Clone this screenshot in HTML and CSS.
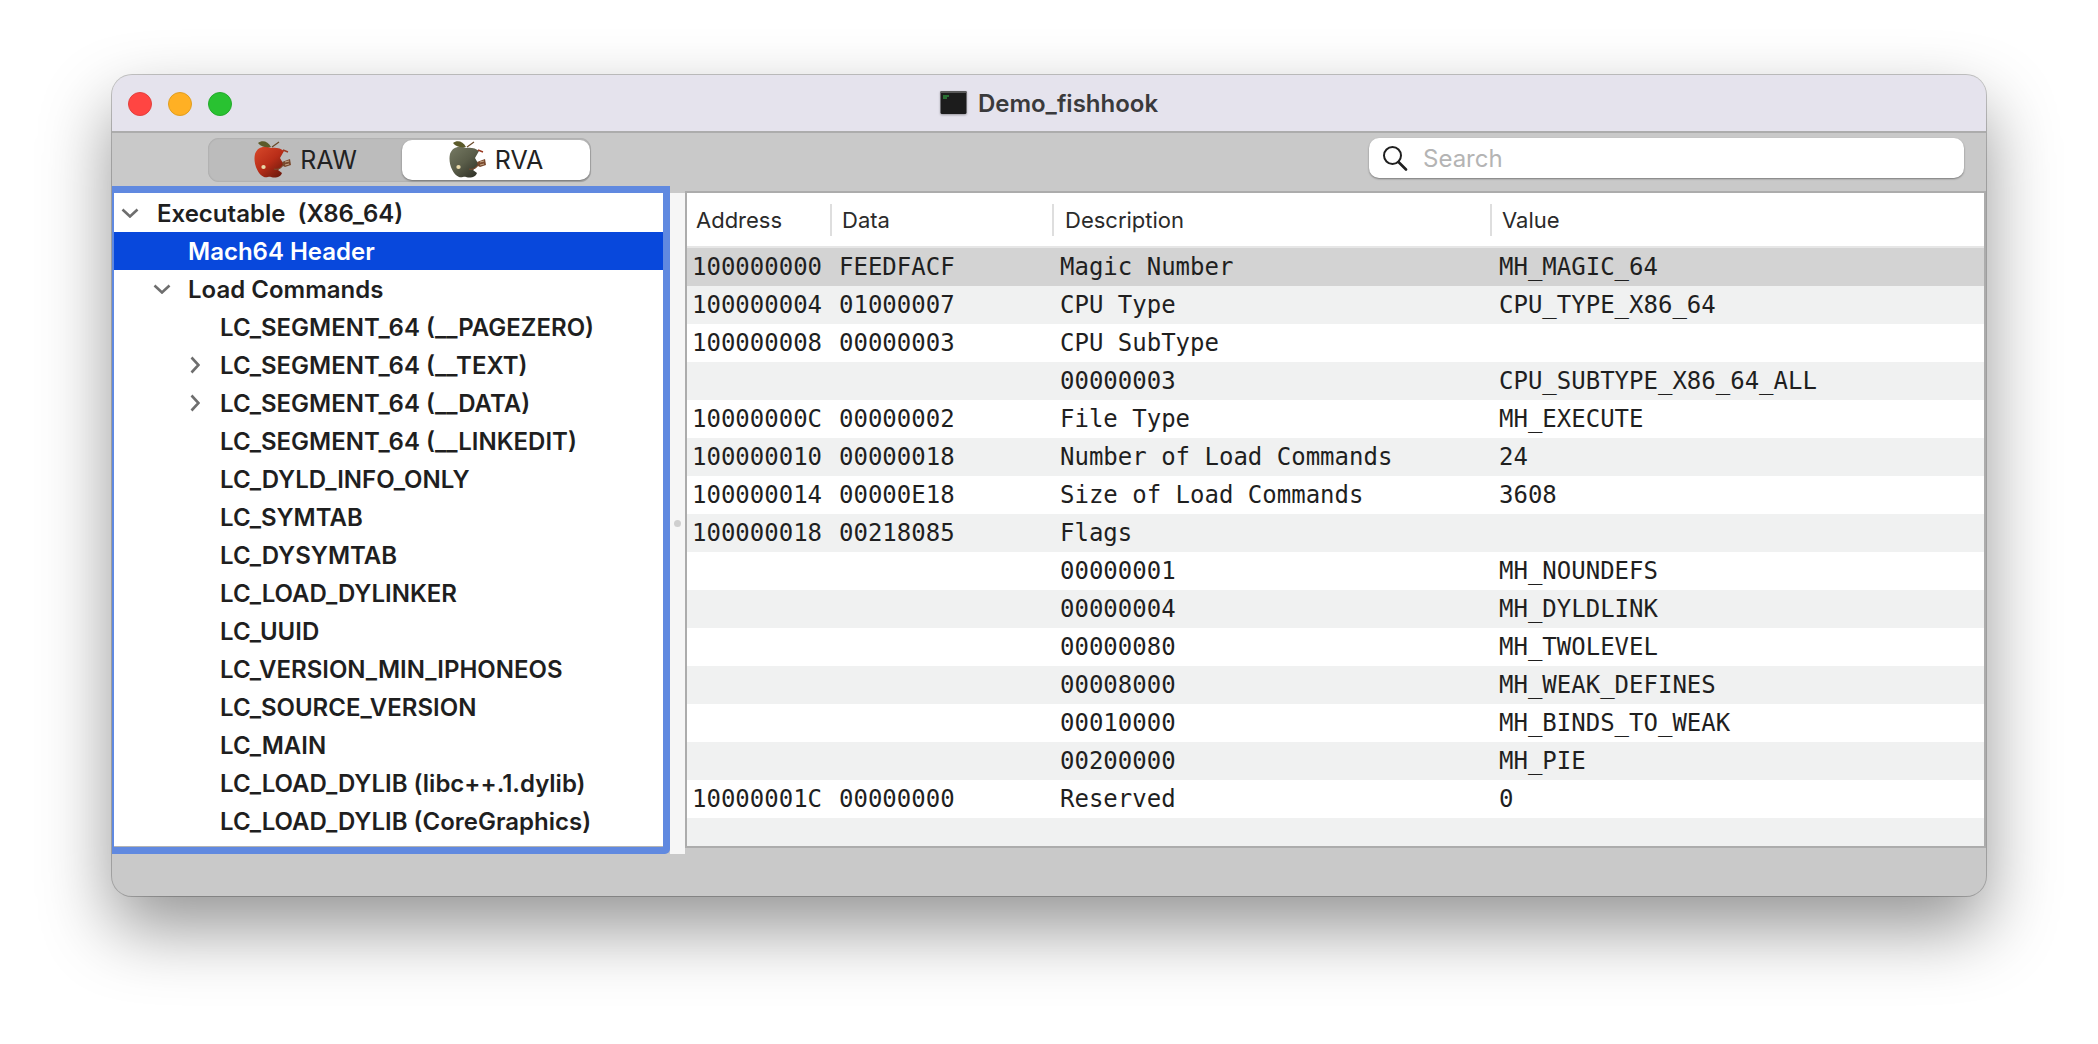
FILE: index.html
```html
<!DOCTYPE html>
<html lang="en">
<head>
  <meta charset="UTF-8" />
  <meta name="viewport" content="width=device-width, initial-scale=1.0" />
  <title>Demo_fishhook</title>
  <link rel="stylesheet" href="styles.css">
</head>
<body>
  <svg class="defs" width="0" height="0">
    <defs>
      <linearGradient id="apple-red" x1="0" y1="0" x2="0.8" y2="1">
        <stop offset="0" stop-color="#d8492a" />
        <stop offset="0.55" stop-color="#b92d18" />
        <stop offset="1" stop-color="#6e1a0d" />
      </linearGradient>
      <linearGradient id="apple-grey" x1="0" y1="0" x2="0.8" y2="1">
        <stop offset="0" stop-color="#767a63" />
        <stop offset="0.55" stop-color="#5a5d49" />
        <stop offset="1" stop-color="#33352a" />
      </linearGradient>
      <g id="apple-parts">
        <path d="M18 6 L25 1" fill="none" stroke="#6a4a2a" stroke-width="1.2" />
        <path d="M4 2 C8 -1 14 0 17 6 C12 7 7 6 4 2 Z" fill="#5b5a2a" />
        <path d="M28 21 L36 18 L37 24 L31 26 L29 25 Z" fill="#7a4a2e" />
        <path d="M31 21 L35 20 M31 24 L35 23" stroke="#d8c0a0" stroke-width="0.8" fill="none" />
        <path d="M29 9 L34 11" stroke="#9a3a22" stroke-width="1.4" fill="none" />
        <path d="M20 28 C24 29 27 27 29 24" fill="none" stroke="#7a4a2e" stroke-width="1.2" />
        <ellipse cx="9.5" cy="26" rx="2.2" ry="2" fill="#e8d8a8" />
      </g>
    </defs>
  </svg>

  <div class="window">
    <header class="titlebar">
      <div class="lights">
        <span class="light red"></span>
        <span class="light orange"></span>
        <span class="light green"></span>
      </div>
      <div class="doc-title">
        <svg class="term-icon" width="27" height="24" viewBox="0 0 27 24">
          <rect x="0.5" y="0" width="26" height="23" rx="1.5" fill="#1c1c1c" />
          <rect x="0.5" y="0" width="26" height="2" fill="#5a5a5a" />
          <path d="M3 5 h6 M3 7 h4" stroke="#37c24a" stroke-width="1" />
        </svg>
        <span>Demo_fishhook</span>
      </div>
    </header>

    <div class="toolbar">
      <div class="segmented">
        <div class="segment raw">
          <svg class="apple" width="38" height="38" viewBox="0 0 38 38">
            <path d="M17 7 C11 4 3 6 1 13 C-1 21 3 33 10 36 C13 37 15 35 17 36 C21 37 26 37 28 32 L24 29 L30 24 L26 17 L30 10 C27 7 21 6 17 7 Z" fill="url(#apple-red)" />
            <use href="#apple-parts" />
          </svg>
          <span>RAW</span>
        </div>
        <div class="segment rva">
          <svg class="apple" width="38" height="38" viewBox="0 0 38 38">
            <path d="M17 7 C11 4 3 6 1 13 C-1 21 3 33 10 36 C13 37 15 35 17 36 C21 37 26 37 28 32 L24 29 L30 24 L26 17 L30 10 C27 7 21 6 17 7 Z" fill="url(#apple-grey)" />
            <use href="#apple-parts" />
          </svg>
          <span>RVA</span>
        </div>
      </div>
      <div class="search">
        <svg width="26" height="26" viewBox="0 0 26 26">
          <circle cx="10.5" cy="10.5" r="8.5" fill="none" stroke="#1f1f1f" stroke-width="2" />
          <path d="M16.5 17 L24 24.5" stroke="#1f1f1f" stroke-width="2.6" stroke-linecap="round" />
        </svg>
        <span>Search</span>
      </div>
    </div>

    <div class="content">
      <div class="tree-panel">
        <div class="tree">
          <div class="node lvl0"><svg class="chev" width="18" height="10" viewBox="0 0 18 10"><path d="M1.5 1.5 L9 8.5 L16.5 1.5" /></svg>Executable&nbsp; (X86_64)</div>
          <div class="node lvl1 selected">Mach64 Header</div>
          <div class="node lvl1"><svg class="chev" width="18" height="10" viewBox="0 0 18 10"><path d="M1.5 1.5 L9 8.5 L16.5 1.5" /></svg>Load Commands</div>
          <div class="node lvl2">LC_SEGMENT_64 (__PAGEZERO)</div>
          <div class="node lvl2"><svg class="chev side" width="10" height="18" viewBox="0 0 10 18"><path d="M1.5 1.5 L8.5 9 L1.5 16.5" /></svg>LC_SEGMENT_64 (__TEXT)</div>
          <div class="node lvl2"><svg class="chev side" width="10" height="18" viewBox="0 0 10 18"><path d="M1.5 1.5 L8.5 9 L1.5 16.5" /></svg>LC_SEGMENT_64 (__DATA)</div>
          <div class="node lvl2">LC_SEGMENT_64 (__LINKEDIT)</div>
          <div class="node lvl2">LC_DYLD_INFO_ONLY</div>
          <div class="node lvl2">LC_SYMTAB</div>
          <div class="node lvl2">LC_DYSYMTAB</div>
          <div class="node lvl2">LC_LOAD_DYLINKER</div>
          <div class="node lvl2">LC_UUID</div>
          <div class="node lvl2">LC_VERSION_MIN_IPHONEOS</div>
          <div class="node lvl2">LC_SOURCE_VERSION</div>
          <div class="node lvl2">LC_MAIN</div>
          <div class="node lvl2">LC_LOAD_DYLIB (libc++.1.dylib)</div>
          <div class="node lvl2">LC_LOAD_DYLIB (CoreGraphics)</div>
        </div>
      </div>

      <div class="splitter"><span class="grip"></span></div>

      <div class="table">
        <div class="thead">
          <div class="th th-addr">Address</div>
          <div class="th th-data">Data</div>
          <div class="th th-desc">Description</div>
          <div class="th th-val">Value</div>
        </div>
        <div class="tbody">
          <div class="row current"><span class="addr">100000000</span><span class="data">FEEDFACF</span><span class="desc">Magic Number</span><span>MH_MAGIC_64</span></div>
          <div class="row"><span class="addr">100000004</span><span class="data">01000007</span><span class="desc">CPU Type</span><span>CPU_TYPE_X86_64</span></div>
          <div class="row"><span class="addr">100000008</span><span class="data">00000003</span><span class="desc">CPU SubType</span><span></span></div>
          <div class="row"><span class="addr"></span><span class="data"></span><span class="desc">00000003</span><span>CPU_SUBTYPE_X86_64_ALL</span></div>
          <div class="row"><span class="addr">10000000C</span><span class="data">00000002</span><span class="desc">File Type</span><span>MH_EXECUTE</span></div>
          <div class="row"><span class="addr">100000010</span><span class="data">00000018</span><span class="desc">Number of Load Commands</span><span>24</span></div>
          <div class="row"><span class="addr">100000014</span><span class="data">00000E18</span><span class="desc">Size of Load Commands</span><span>3608</span></div>
          <div class="row"><span class="addr">100000018</span><span class="data">00218085</span><span class="desc">Flags</span><span></span></div>
          <div class="row"><span class="addr"></span><span class="data"></span><span class="desc">00000001</span><span>MH_NOUNDEFS</span></div>
          <div class="row"><span class="addr"></span><span class="data"></span><span class="desc">00000004</span><span>MH_DYLDLINK</span></div>
          <div class="row"><span class="addr"></span><span class="data"></span><span class="desc">00000080</span><span>MH_TWOLEVEL</span></div>
          <div class="row"><span class="addr"></span><span class="data"></span><span class="desc">00008000</span><span>MH_WEAK_DEFINES</span></div>
          <div class="row"><span class="addr"></span><span class="data"></span><span class="desc">00010000</span><span>MH_BINDS_TO_WEAK</span></div>
          <div class="row"><span class="addr"></span><span class="data"></span><span class="desc">00200000</span><span>MH_PIE</span></div>
          <div class="row"><span class="addr">10000001C</span><span class="data">00000000</span><span class="desc">Reserved</span><span>0</span></div>
          <div class="row filler"></div>
        </div>
      </div>
    </div>
  </div>
</body>
</html>
```

FILE: styles.css
```css
* {
  box-sizing: border-box;
}

body {
  margin: 0;
  height: 1044px;
  background: #ffffff;
  font-family: Inter, 'Liberation Sans', sans-serif;
  color: #1f1f1f;
  overflow: hidden;
}

.defs {
  display: block;
}

.window {
  width: 1874px;
  height: 821px;
  margin: 75px 0 0 112px;
  display: flex;
  flex-direction: column;
  background: #c9c9c9;
  border-radius: 20px;
  overflow: hidden;
}

body::before {
  content: "";
  position: absolute;
  left: 112px;
  top: 75px;
  width: 1874px;
  height: 821px;
  border-radius: 20px;
  box-shadow: 0 0 0 1px rgba(0, 0, 0, 0.22), 0 32px 70px rgba(0, 0, 0, 0.42);
}

.window > * {
  position: relative;
}

.titlebar {
  height: 58px;
  flex: none;
  display: flex;
  align-items: center;
  justify-content: center;
  background: #e5e3ed;
  border-bottom: 2px solid #acacac;
}

.lights {
  position: absolute;
  left: 16px;
  top: 17px;
  display: flex;
  gap: 16px;
}

.light {
  width: 24px;
  height: 24px;
  border-radius: 50%;
}

.red {
  background: #ff4542;
  border: 1px solid #e2403e;
}

.orange {
  background: #ffb024;
  border: 1px solid #e09e20;
}

.green {
  background: #29c231;
  border: 1px solid #24aa2c;
}

.doc-title {
  display: flex;
  align-items: center;
  gap: 11px;
  font-size: 24px;
  font-weight: 600;
  color: #3a3a3c;
  margin-left: 0;
}

.term-icon {
  filter: drop-shadow(0 1px 1px rgba(0, 0, 0, 0.35));
}

.toolbar {
  height: 53px;
  flex: none;
  display: flex;
  align-items: flex-start;
  justify-content: space-between;
  padding: 5px 22px 0 96px;
}

.segmented {
  width: 383px;
  height: 44px;
  display: flex;
  padding: 2px 1px;
  background: #bcbcbc;
  border-radius: 11px;
  box-shadow: inset 0 0 2px rgba(0, 0, 0, 0.2);
}

.segment {
  display: flex;
  align-items: center;
  justify-content: center;
  gap: 8px;
  font-size: 25px;
  color: #222222;
}

.segment.raw {
  width: 193px;
}

.segment.rva {
  width: 188px;
  background: #ffffff;
  border-radius: 10px;
  box-shadow: 0 1px 2px rgba(0, 0, 0, 0.4);
}

.search {
  width: 595px;
  height: 40px;
  display: flex;
  align-items: center;
  gap: 15px;
  padding-left: 13px;
  background: #ffffff;
  border-radius: 10px;
  box-shadow: 0 1px 2px rgba(0, 0, 0, 0.4);
  font-size: 24px;
  color: #b4b4b4;
}

.content {
  height: 668px;
  flex: none;
  display: flex;
}

.tree-panel {
  width: 558px;
  height: 668px;
  flex: none;
  background: #6089e0;
  padding: 7px 7px 7px 2px;
  border-bottom-right-radius: 5px;
}

.tree {
  height: 100%;
  padding-top: 1px;
  background: #ffffff;
  box-shadow: inset 0 -1px 0 #b4b4b4;
}

.node {
  position: relative;
  height: 38px;
  display: flex;
  align-items: center;
  font-size: 24px;
  font-weight: 600;
  color: #1f1f1f;
}

.lvl0 {
  padding-left: 43px;
}

.lvl1 {
  padding-left: 74px;
}

.lvl2 {
  padding-left: 106px;
}

.selected {
  background: #0848dc;
  color: #ffffff;
}

.chev {
  position: absolute;
  top: 14px;
  left: 7px;
  fill: none;
  stroke: #6e6e6e;
  stroke-width: 2.6;
}

.lvl1 .chev {
  left: 39px;
}

.chev.side {
  top: 10px;
  left: 76px;
}

.splitter {
  width: 15px;
  height: 661px;
  margin-top: 7px;
  flex: none;
  display: flex;
  align-items: center;
  justify-content: center;
  background: #f6f6f6;
}

.grip {
  width: 7px;
  height: 7px;
  border-radius: 50%;
  background: #cfcfcf;
}

.table {
  width: 1301px;
  height: 657px;
  margin-top: 5px;
  flex: none;
  display: flex;
  flex-direction: column;
  background: #ffffff;
  border: 2px solid #acacac;
  border-top-width: 2px;
}

.thead {
  height: 55px;
  flex: none;
  display: flex;
  align-items: center;
  border-bottom: 2px solid #e6e6e6;
  font-size: 22px;
  color: #2a2a2a;
}

.th {
  height: 32px;
  display: flex;
  align-items: center;
  border-right: 2px solid #dedede;
}

.th-addr {
  width: 145px;
  padding-left: 9px;
}

.th-data {
  width: 222px;
  padding-left: 10px;
}

.th-desc {
  width: 438px;
  padding-left: 11px;
}

.th-val {
  border-right: none;
  padding-left: 10px;
}

.tbody {
  flex: 1;
  display: flex;
  flex-direction: column;
  overflow: hidden;
}

.row {
  height: 38px;
  flex: none;
  display: flex;
  align-items: center;
  padding-left: 5px;
  font-family: 'DejaVu Sans Mono', 'Liberation Mono', monospace;
  font-size: 24px;
  color: #1f1f1f;
  white-space: pre;
}

.row:nth-child(even) {
  background: #f0f1f1;
}

.row.current {
  background: #d3d3d3;
}

.row.filler {
  flex: 1;
}

.addr {
  width: 147px;
}

.data {
  width: 221px;
}

.desc {
  width: 439px;
}
```
